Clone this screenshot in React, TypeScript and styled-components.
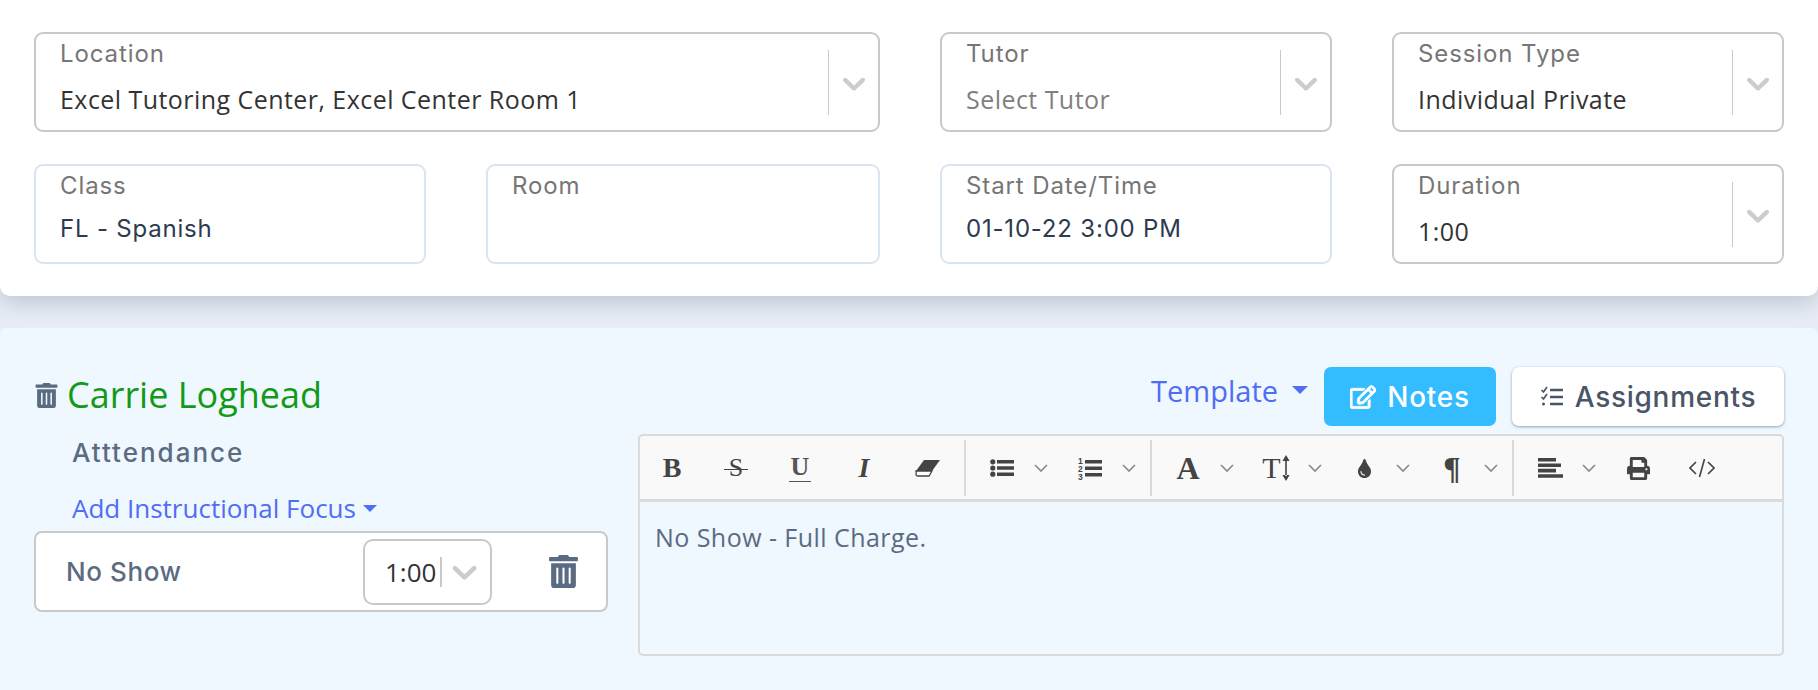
import React from 'react'
import styled, { createGlobalStyle } from 'styled-components'
import { FaPrint, FaRegEdit, FaTint, FaTrashAlt } from 'react-icons/fa'

const GlobalStyle = createGlobalStyle`
  html, body {
    margin: 0;
    padding: 0;
    background: #e8edf5;
    font-family: "Open Sans", "Liberation Sans", sans-serif;
  }
`

const Page = styled.div`
  width: 1818px;
  height: 690px;
  overflow: hidden;
  display: flex;
  flex-direction: column;
  gap: 32px;
`

const TopPanel = styled.section`
  height: 296px;
  box-sizing: border-box;
  padding: 32px 34px 0;
  background: #fff;
  border-radius: 0 0 10px 10px;
  box-shadow: 0 6px 24px rgba(90, 105, 135, 0.32);
  display: grid;
  grid-template-columns: 392px 394px 392px 392px;
  grid-template-rows: 100px 100px;
  column-gap: 60px;
  row-gap: 32px;
`

const Field = styled.div<{ $wide?: boolean; $select?: boolean }>`
  grid-column: ${(p) => (p.$wide ? 'span 2' : 'span 1')};
  box-sizing: border-box;
  position: relative;
  padding: 5px 24px 0;
  background: #fff;
  border: 2px solid ${(p) => (p.$select ? '#c9c9c9' : '#d9e5f2')};
  border-radius: 9px;
`

const Label = styled.div`
  font-family: Inter, "Liberation Sans", sans-serif;
  font-size: 24px;
  letter-spacing: 0.9px;
  line-height: 30px;
  color: #767676;
`

const Value = styled.div<{ $tone?: 'dark' | 'slate' | 'muted' }>`
  margin-top: ${(p) => (p.$tone === 'slate' ? 13 : 15)}px;
  font-family: ${(p) => (p.$tone === 'slate' ? 'Inter, ' : '')}"Open Sans", sans-serif;
  font-size: ${(p) => (p.$tone === 'slate' ? 24 : 25)}px;
  letter-spacing: ${(p) => (p.$tone === 'slate' ? 0.8 : 0.45)}px;
  line-height: 30px;
  white-space: nowrap;
  color: ${(p) => (p.$tone === 'slate' ? '#2d3a50' : p.$tone === 'muted' ? '#808080' : '#333')};
`

const Indicator = styled.div`
  position: absolute;
  top: 16px;
  right: 0;
  bottom: 15px;
  width: 49px;
  display: flex;
  align-items: center;
  justify-content: center;
  border-left: 1.5px solid #c9c9c9;
`

const LowerPanel = styled.section`
  flex: 1;
  box-sizing: border-box;
  padding: 39px 34px 0;
  background: #eff7ff;
  border-radius: 6px 6px 0 0;
  display: grid;
  grid-template-columns: 574px 1fr;
  column-gap: 30px;
`

const LeftColumn = styled.div`
  display: flex;
  flex-direction: column;
`

const StudentRow = styled.div`
  display: flex;
  align-items: center;
  gap: 8px;
  height: 56px;
  color: #5b6b82;
  font-size: 25px;
`

const StudentName = styled.div`
  font-size: 36px;
  line-height: 56px;
  color: #129a16;
`

const Attendance = styled.div`
  margin: 14px 0 0 38px;
  font-family: Inter, "Liberation Sans", sans-serif;
  font-weight: 500;
  font-size: 26px;
  letter-spacing: 2px;
  line-height: 32px;
  color: #5b6b82;
`

const FocusLink = styled.div`
  margin: 22px 0 0 38px;
  display: flex;
  align-items: center;
  gap: 7px;
  font-size: 26px;
  line-height: 34px;
  white-space: nowrap;
  color: #4f6df5;
`

const Caret = styled.span<{ $size: number }>`
  width: 0;
  height: 0;
  border-left: ${(p) => p.$size}px solid transparent;
  border-right: ${(p) => p.$size}px solid transparent;
  border-top: ${(p) => p.$size}px solid #4f6df5;
`

const AttendanceBox = styled.div`
  margin-top: 6px;
  height: 81px;
  box-sizing: border-box;
  padding: 0 26px 0 30px;
  background: #fff;
  border: 2px solid #c9c9c9;
  border-radius: 8px;
  display: flex;
  align-items: center;
  color: #5b6b82;
`

const AttendanceName = styled.div`
  flex: 1;
  font-family: Inter, "Liberation Sans", sans-serif;
  font-weight: 500;
  font-size: 26px;
  letter-spacing: 0.6px;
`

const MiniSelect = styled.div`
  width: 129px;
  height: 66px;
  box-sizing: border-box;
  margin-right: 55px;
  padding-left: 20px;
  border: 2px solid #c9c9c9;
  border-radius: 10px;
  display: flex;
  align-items: center;
  background: #fff;
  font-size: 26px;
  color: #333;
`

const MiniDivider = styled.span`
  flex: none;
  width: 1.5px;
  height: 30px;
  margin: 0 2px 0 4px;
  background: #c9c9c9;
`

const RightColumn = styled.div`
  display: flex;
  flex-direction: column;
`

const ActionRow = styled.div`
  display: flex;
  justify-content: flex-end;
  align-items: center;
  height: 59px;
`

const TemplateLink = styled.div`
  margin-right: 16px;
  display: flex;
  align-items: center;
  gap: 14px;
  font-size: 29px;
  color: #4f6df5;
  padding-bottom: 13px;
`

const ActionButton = styled.div<{ $primary?: boolean }>`
  height: 59px;
  box-sizing: border-box;
  display: flex;
  align-items: center;
  justify-content: center;
  gap: 11px;
  border-radius: 7px;
  font-family: Inter, "Liberation Sans", sans-serif;
  font-weight: 500;
  font-size: 28px;
  letter-spacing: 0.7px;
  width: ${(p) => (p.$primary ? '172px' : '272px')};
  margin-left: ${(p) => (p.$primary ? '0' : '16px')};
  color: ${(p) => (p.$primary ? '#fff' : '#4a5568')};
  background: ${(p) => (p.$primary ? '#33bcff' : '#fff')};
  box-shadow: ${(p) => (p.$primary ? 'none' : '0 1px 3px rgba(70, 90, 120, 0.55)')};
`

const Editor = styled.div`
  margin-top: 8px;
  height: 222px;
  box-sizing: border-box;
  border: 2px solid #dadada;
  border-radius: 5px;
`

const Toolbar = styled.div`
  height: 66px;
  box-sizing: border-box;
  padding-top: 4px;
  border-bottom: 3px solid #dadada;
  background: #f9f9f9;
  border-radius: 4px 4px 0 0;
  display: flex;
  align-items: flex-start;
  color: #444;
`

const Separator = styled.span`
  width: 2px;
  height: 56px;
  margin: 0 4px;
  background: #d9d9d9;
`

const ToolSlot = styled.span`
  width: 64px;
  height: 56px;
  display: flex;
  align-items: center;
  justify-content: center;
  font-family: "Liberation Serif", serif;
  font-size: 28px;
  color: #444;
`

const ToolMenu = styled.span`
  display: flex;
  align-items: center;
  height: 56px;
  width: 88px;
`

const GlyphBold = styled.span`
  font-weight: 700;
`

const GlyphItalic = styled.span`
  font-style: italic;
  font-weight: 700;
`

const GlyphStrike = styled.span`
  position: relative;
  font-size: 26px;
  line-height: 1;

  &::after {
    content: "";
    position: absolute;
    left: -5px;
    right: -5px;
    top: 52%;
    height: 1.5px;
    background: #444;
  }
`

const GlyphUnderline = styled.span`
  padding: 0 2px 1px;
  border-bottom: 1.5px solid #555;
  font-size: 26px;
  font-weight: 700;
  line-height: 1;
  color: #555;
`

const GlyphLarge = styled.span`
  font-size: 32px;
  font-weight: 700;
  line-height: 1;
`

const GlyphTall = styled.span`
  display: flex;
  align-items: center;
  gap: 1px;
  font-size: 30px;
  line-height: 1;
`

const EditorBody = styled.div`
  padding: 20px 15px;
  font-size: 25px;
  letter-spacing: 0.45px;
  line-height: 30px;
  color: #5b6b82;
`

const SelectChevron = ({ size = 38 }: { size?: number }) => (
  <svg width={size} height={size} viewBox="0 0 20 20" fill="#cccccc" style={{ flex: 'none' }}>
    <path d="M4.516 7.548c0.436-0.446 1.043-0.481 1.576 0l3.908 3.747 3.908-3.747c0.533-0.481 1.141-0.446 1.576 0 0.436 0.445 0.408 1.197 0 1.615-0.406 0.418-4.695 4.502-4.695 4.502-0.217 0.223-0.502 0.335-0.789 0.335s-0.572-0.112-0.791-0.335c0 0-4.287-4.084-4.695-4.502s-0.436-1.17 0-1.615z" />
  </svg>
)

const MenuChevron = () => (
  <svg width="14" height="9" viewBox="0 0 14 9" fill="none" stroke="#8a8a8a" strokeWidth="1.6">
    <path d="M1 1l6 6 6-6" />
  </svg>
)

const EraserIcon = () => (
  <svg width="26" height="18" viewBox="0 0 26 18">
    <path d="M9 1h16l-8 11H1z" fill="#444" />
    <path d="M1 12h16l-3 5H2.5a1.5 1.5 0 0 1-1.3-2.2z" fill="#fff" stroke="#444" strokeWidth="1.3" />
  </svg>
)

const BulletIcon = () => (
  <svg width="24" height="18" viewBox="0 0 24 18" fill="#444">
    <path d="M7 1h17v3.5H7zM7 7.2h17v3.5H7zM7 13.5h17V17H7z" />
    <circle cx="2.8" cy="2.8" r="2.6" />
    <circle cx="2.8" cy="9" r="2.6" />
    <circle cx="2.8" cy="15.2" r="2.6" />
  </svg>
)

const NumberIcon = () => (
  <svg width="24" height="25" viewBox="0 0 24 25" fill="#444">
    <path d="M7 4h17v3.5H7zM7 10.5h17V14H7zM7 17h17v3.5H7z" />
    <text x="0" y="8" fontSize="8.5" fontWeight="700" fontFamily="Liberation Sans, sans-serif">1</text>
    <text x="0" y="16" fontSize="8.5" fontWeight="700" fontFamily="Liberation Sans, sans-serif">2</text>
    <text x="0" y="24" fontSize="8.5" fontWeight="700" fontFamily="Liberation Sans, sans-serif">3</text>
  </svg>
)

const AlignIcon = () => (
  <svg width="25" height="20" viewBox="0 0 25 20" fill="#444">
    <path d="M0 0h18v3.6H0zM0 5.4h23v3.6H0zM0 10.8h18v3.6H0zM0 16.2h25v3.6H0z" />
  </svg>
)

const SizeArrow = () => (
  <svg width="8" height="26" viewBox="0 0 8 26" fill="#444">
    <path d="M3.2 5h1.6v16H3.2zM4 0l3.6 6H.4zM4 26l3.6-6H.4z" />
  </svg>
)

const TasksIcon = () => (
  <svg width="24" height="24" viewBox="0 0 24 24" fill="none" stroke="#4a5568" strokeWidth="2.4">
    <path d="M10 5h13M10 12h13M10 19h13" />
    <path d="M1.5 5l2 2 3.5-5M1.5 12l2 2 3.5-5" strokeWidth="1.7" />
    <circle cx="3.5" cy="19" r="1.5" fill="#4a5568" stroke="none" />
  </svg>
)

const CodeIcon = () => (
  <svg width="26" height="20" viewBox="0 0 26 20" fill="none" stroke="#444" strokeWidth="1.6">
    <path d="M7 4l-6 6 6 6M19 4l6 6-6 6M15.5 1l-5 18" />
  </svg>
)

const SelectField = ({
  label,
  value,
  wide,
  muted,
}: {
  label: string
  value: string
  wide?: boolean
  muted?: boolean
}) => (
  <Field $wide={wide} $select>
    <Label>{label}</Label>
    <Value $tone={muted ? 'muted' : 'dark'}>{value}</Value>
    <Indicator><SelectChevron /></Indicator>
  </Field>
)

const TextField = ({ label, value }: { label: string; value?: string }) => (
  <Field>
    <Label>{label}</Label>
    {value && <Value $tone="slate">{value}</Value>}
  </Field>
)

const Menu: React.FC<{ children: React.ReactNode }> = ({ children }) => (
  <ToolMenu>
    <ToolSlot>{children}</ToolSlot>
    <MenuChevron />
  </ToolMenu>
)

const App: React.FC = () => (
  <Page>
    <GlobalStyle />
    <TopPanel>
      <SelectField wide label="Location" value="Excel Tutoring Center, Excel Center Room 1" />
      <SelectField muted label="Tutor" value="Select Tutor" />
      <SelectField label="Session Type" value="Individual Private" />
      <TextField label="Class" value="FL - Spanish" />
      <TextField label="Room" />
      <TextField label="Start Date/Time" value="01-10-22 3:00 PM" />
      <SelectField label="Duration" value="1:00" />
    </TopPanel>
    <LowerPanel>
      <LeftColumn>
        <StudentRow>
          <FaTrashAlt />
          <StudentName>Carrie Loghead</StudentName>
        </StudentRow>
        <Attendance>Atttendance</Attendance>
        <FocusLink>
          Add Instructional Focus
          <Caret $size={7} />
        </FocusLink>
        <AttendanceBox>
          <AttendanceName>No Show</AttendanceName>
          <MiniSelect>
            1:00
            <MiniDivider />
            <SelectChevron size={41} />
          </MiniSelect>
          <FaTrashAlt size={33} />
        </AttendanceBox>
      </LeftColumn>
      <RightColumn>
        <ActionRow>
          <TemplateLink>
            Template
            <Caret $size={8} />
          </TemplateLink>
          <ActionButton $primary>
            <FaRegEdit size={26} stroke="currentColor" strokeWidth={18} />
            Notes
          </ActionButton>
          <ActionButton>
            <TasksIcon />
            Assignments
          </ActionButton>
        </ActionRow>
        <Editor>
          <Toolbar>
            <ToolSlot><GlyphBold>B</GlyphBold></ToolSlot>
            <ToolSlot><GlyphStrike>S</GlyphStrike></ToolSlot>
            <ToolSlot><GlyphUnderline>U</GlyphUnderline></ToolSlot>
            <ToolSlot><GlyphItalic>I</GlyphItalic></ToolSlot>
            <ToolSlot><EraserIcon /></ToolSlot>
            <Separator />
            <Menu><BulletIcon /></Menu>
            <Menu><NumberIcon /></Menu>
            <Separator />
            <Menu><GlyphLarge>A</GlyphLarge></Menu>
            <Menu><GlyphTall>T<SizeArrow /></GlyphTall></Menu>
            <Menu><FaTint size={19} /></Menu>
            <Menu><GlyphLarge>¶</GlyphLarge></Menu>
            <Separator />
            <Menu><AlignIcon /></Menu>
            <ToolSlot><FaPrint size={23} /></ToolSlot>
            <ToolSlot><CodeIcon /></ToolSlot>
          </Toolbar>
          <EditorBody>No Show - Full Charge.</EditorBody>
        </Editor>
      </RightColumn>
    </LowerPanel>
  </Page>
)

export default App
